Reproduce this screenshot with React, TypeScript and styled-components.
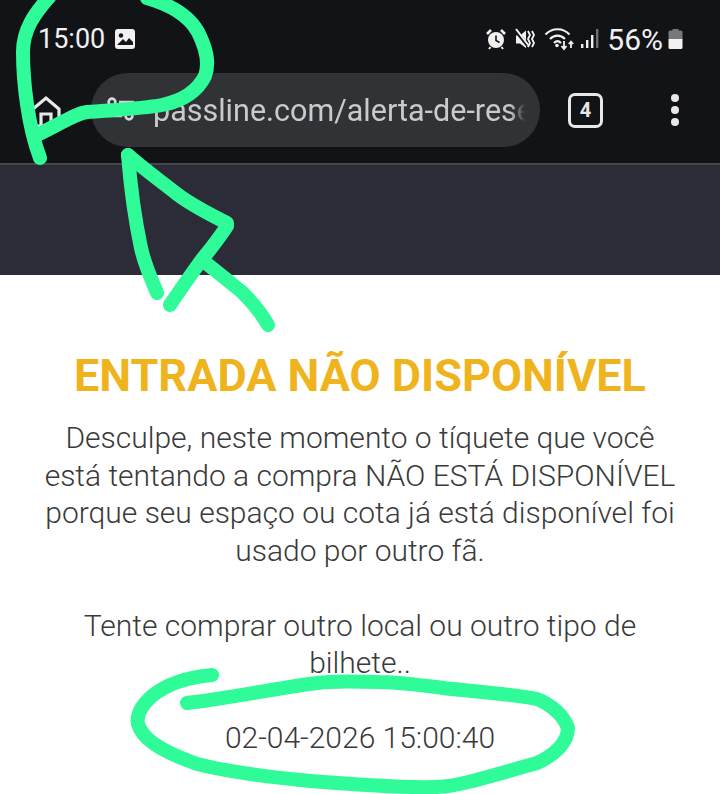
import styled, { createGlobalStyle } from "styled-components";

const GlobalStyle = createGlobalStyle`
  html, body {
    margin: 0;
    padding: 0;
    background: #ffffff;
  }
  body {
    font-family: Roboto, "Liberation Sans", sans-serif;
  }
`;

export default function App() {
  return (
    <Page>
      <GlobalStyle />
      <BrowserChrome>
        <StatusBar>
          <StatusGroup>
            <Clock>15:00</Clock>
            <ImageIcon />
          </StatusGroup>
          <StatusIcons>
            <AlarmIcon />
            <MuteIcon />
            <WifiIcon />
            <SignalSlot>
              <SignalIcon />
            </SignalSlot>
            <Battery>56%</Battery>
            <BatteryIcon />
          </StatusIcons>
        </StatusBar>
        <Toolbar>
          <HomeIcon />
          <UrlPill>
            <TuneIcon />
            <UrlText>passline.com/alerta-de-rese</UrlText>
          </UrlPill>
          <TabCount>4</TabCount>
          <MenuDots>
            <Dot />
            <Dot />
            <Dot />
          </MenuDots>
        </Toolbar>
      </BrowserChrome>
      <Band />
      <Content>
        <Title>ENTRADA NÃO DISPONÍVEL</Title>
        <Message>
          Desculpe, neste momento o tíquete que você
          <br />
          está tentando a compra NÃO ESTÁ DISPONÍVEL
          <br />
          porque seu espaço ou cota já está disponível foi
          <br />
          usado por outro fã.
        </Message>
        <Message>
          Tente comprar outro local ou outro tipo de
          <br />
          bilhete..
        </Message>
        <Stamp>02-04-2026 15:00:40</Stamp>
      </Content>
      <Scribbles />
    </Page>
  );
}

function ImageIcon() {
  return (
    <svg width="22" height="22" viewBox="0 0 22 22">
      <rect x="1" y="1" width="20" height="20" rx="3" fill="#f1f1f1" />
      <circle cx="7" cy="7.5" r="2.2" fill="#15161a" />
      <path d="M3 17 L9 11 L12 14 L15 10 L19 14 V17 Z" fill="#15161a" />
    </svg>
  );
}

function AlarmIcon() {
  return (
    <svg width="20" height="22" viewBox="0 0 20 22">
      <circle cx="10" cy="12" r="8" fill="#f1f1f1" />
      <path d="M10 7.5 V12.5 L13.5 14.5" stroke="#15161a" strokeWidth="1.6" fill="none" />
      <path d="M1 6 L5 2 M19 6 L15 2" stroke="#f1f1f1" strokeWidth="2.6" />
      <path d="M4.5 19 L3 21 M15.5 19 L17 21" stroke="#f1f1f1" strokeWidth="2" />
    </svg>
  );
}

function MuteIcon() {
  return (
    <svg width="20" height="22" viewBox="0 0 20 22">
      <path d="M1 7.5 H5 L11 2.5 V20 L5 15.5 H1 Z" fill="#f1f1f1" />
      <path d="M0 1.5 L13 18" stroke="#15161a" strokeWidth="3.6" />
      <path d="M1 1 L14 18" stroke="#f1f1f1" strokeWidth="2" />
      <path d="M13 3 L15 7 L13 11 L15 15 L13 19" stroke="#f1f1f1" strokeWidth="1.8" fill="none" />
      <path d="M17 3 L19 7 L17 11 L19 15 L17 19" stroke="#f1f1f1" strokeWidth="1.8" fill="none" />
    </svg>
  );
}

function WifiIcon() {
  return (
    <svg width="31" height="24" viewBox="0 0 31 24">
      <g fill="none" stroke="#f1f1f1" strokeWidth="2.2">
        <path d="M1.5 7.5 C8 0.5 19 0.5 25.5 7.5" />
        <path d="M6 12 C10.5 7.5 16.5 7.5 21 12" />
        <path d="M10 16 C12.5 13.5 14.5 13.5 17 16" />
      </g>
      <circle cx="13" cy="18.5" r="1.8" fill="#f1f1f1" />
      <path d="M20 14 V21 M17.5 19 L20 22 L22.5 19" stroke="#f1f1f1" strokeWidth="1.8" fill="none" />
      <path d="M27 21 V15 M24.8 17 L27 14.5 L29.2 17" stroke="#f1f1f1" strokeWidth="1.8" fill="none" />
    </svg>
  );
}

function SignalIcon() {
  return (
    <svg width="19" height="22" viewBox="0 0 19 22">
      <rect x="1" y="16" width="2.4" height="4" fill="#f1f1f1" />
      <rect x="6" y="12" width="2.4" height="8" fill="#f1f1f1" />
      <rect x="11" y="7" width="2.4" height="13" fill="#f1f1f1" />
      <rect x="16" y="1" width="2.4" height="19" fill="#6e6f73" />
    </svg>
  );
}

function BatteryIcon() {
  return (
    <svg width="15" height="22" viewBox="0 0 15 22">
      <path d="M4.5 1 H10.5 V2.5 H13 A1.5 1.5 0 0 1 14.5 4 V11 H0.5 V4 A1.5 1.5 0 0 1 2 2.5 H4.5 Z" fill="#77787c" />
      <path d="M0.5 11 H14.5 V19.5 A1.5 1.5 0 0 1 13 21 H2 A1.5 1.5 0 0 1 0.5 19.5 Z" fill="#f1f1f1" />
    </svg>
  );
}

function HomeIcon() {
  return (
    <HomeSlot>
      <svg width="30" height="34" viewBox="0 0 30 34" fill="none" stroke="#e8e8e8" strokeWidth="3.2">
        <path d="M2 14 L15 3 L28 14 V31 H2 Z" />
        <path d="M10 31 V19 H20 V31" />
      </svg>
    </HomeSlot>
  );
}

function TuneIcon() {
  return (
    <svg width="28" height="26" viewBox="0 0 28 26" fill="none" stroke="#d8d8da" strokeWidth="2.6">
      <circle cx="5" cy="5" r="3.4" />
      <path d="M12 5 H27" />
      <circle cx="22" cy="19" r="3.4" />
      <path d="M1 19 H15" />
    </svg>
  );
}

function Scribbles() {
  return (
    <ScribbleLayer viewBox="0 0 720 794">
      <g fill="none" stroke="#30fb99" strokeWidth="14" strokeLinecap="round" strokeLinejoin="round">
        <path d="M50 -4 C34 14 23 30 23 52 C23 82 28 126 40 158" />
        <path d="M147 -2 C168 4 188 14 198 32 C206 48 210 62 205 76 C197 92 182 101 162 105 C140 109 110 110 87 112 C74 114 64 122 37 135" />
        <path d="M128 155 C130 180 134 215 141 248 C145 266 151 278 157 293" />
        <path d="M128 155 C145 170 162 182 177 194 C190 204 205 212 227 223" />
        <path d="M227 226 C218 240 208 252 200 262 C190 276 180 290 170 305" />
        <path d="M202 260 C220 274 232 284 242 292 C252 302 262 314 268 325" />
        <path d="M212 675 C190 677 168 683 152 696 C142 705 136 714 138 724 C142 738 158 750 197 764 C225 771 260 776 300 780 C345 784 400 788 437 787 C460 786 490 776 537 763 C555 755 568 742 568 728 C564 716 552 705 537 699 C520 695 480 692 443 688 C420 685 400 682 377 682 C350 681 330 681 317 683 C290 686 230 698 187 703" />
      </g>
    </ScribbleLayer>
  );
}

const Page = styled.div`
  position: relative;
  width: 720px;
  height: 794px;
  overflow: hidden;
  background: #ffffff;
`;

const BrowserChrome = styled.header`
  height: 163px;
  display: flex;
  flex-direction: column;
  background: #121317;
  border-bottom: 2px solid #46474b;
  box-sizing: content-box;
`;

const StatusBar = styled.div`
  height: 73px;
  display: flex;
  justify-content: space-between;
  align-items: flex-start;
  padding: 24px 37px 0 38px;
  box-sizing: border-box;
`;

const StatusGroup = styled.div`
  display: flex;
  align-items: center;
  gap: 9px;
  height: 30px;
`;

const StatusIcons = styled.div`
  display: flex;
  align-items: center;
  gap: 9px;
  height: 30px;
`;

const SignalSlot = styled.div`
  display: flex;
  margin-left: -4px;
`;

const Clock = styled.span`
  color: #f1f1f1;
  font-size: 27px;
  font-weight: 400;
`;

const Battery = styled.span`
  color: #f1f1f1;
  font-size: 30px;
  font-weight: 400;
  margin-left: -1px;
  margin-right: -4px;
`;

const Toolbar = styled.div`
  height: 74px;
  display: flex;
  align-items: center;
  padding-left: 31px;
`;

const HomeSlot = styled.div`
  width: 60px;
  display: flex;
  align-items: center;
  padding-top: 4px;
`;

const UrlPill = styled.div`
  width: 449px;
  height: 74px;
  display: flex;
  align-items: center;
  gap: 18px;
  padding-left: 16px;
  padding-right: 15px;
  box-sizing: border-box;
  border-radius: 37px;
  background: #313236;
  overflow: hidden;
`;

const UrlText = styled.span`
  color: #c9cace;
  font-size: 30.5px;
  white-space: nowrap;
  overflow: hidden;
  flex: 1;
  -webkit-mask-image: linear-gradient(to right, #000 96%, transparent);
  mask-image: linear-gradient(to right, #000 96%, transparent);
`;

const TabCount = styled.div`
  width: 35px;
  height: 35px;
  margin-left: 28px;
  box-sizing: border-box;
  border: 3px solid #e8e8e8;
  border-radius: 7px;
  color: #e8e8e8;
  font-size: 20px;
  font-weight: 700;
  display: flex;
  align-items: center;
  justify-content: center;
`;

const MenuDots = styled.div`
  margin-left: 68px;
  display: flex;
  flex-direction: column;
  gap: 4px;
`;

const Dot = styled.span`
  width: 8px;
  height: 8px;
  border-radius: 50%;
  background: #e8e8e8;
`;

const Band = styled.div`
  height: 110px;
  background: #2b2c37;
`;

const Content = styled.main`
  display: flex;
  flex-direction: column;
  align-items: center;
  text-align: center;
  padding-top: 75px;
  background: #ffffff;
`;

const Title = styled.h1`
  margin: 0 0 17px;
  color: #efb41d;
  font-size: 45px;
  line-height: 52px;
  font-weight: 700;
  white-space: nowrap;
`;

const Message = styled.p`
  margin: 0 0 37.5px;
  color: #3a3a3a;
  font-size: 30px;
  line-height: 37.5px;
  font-weight: 300;
  white-space: nowrap;
`;

const Stamp = styled.div`
  color: #3a3a3a;
  font-size: 30px;
  line-height: 37.5px;
  font-weight: 300;
`;

const ScribbleLayer = styled.svg`
  position: absolute;
  inset: 0;
  width: 720px;
  height: 794px;
  pointer-events: none;
`;
